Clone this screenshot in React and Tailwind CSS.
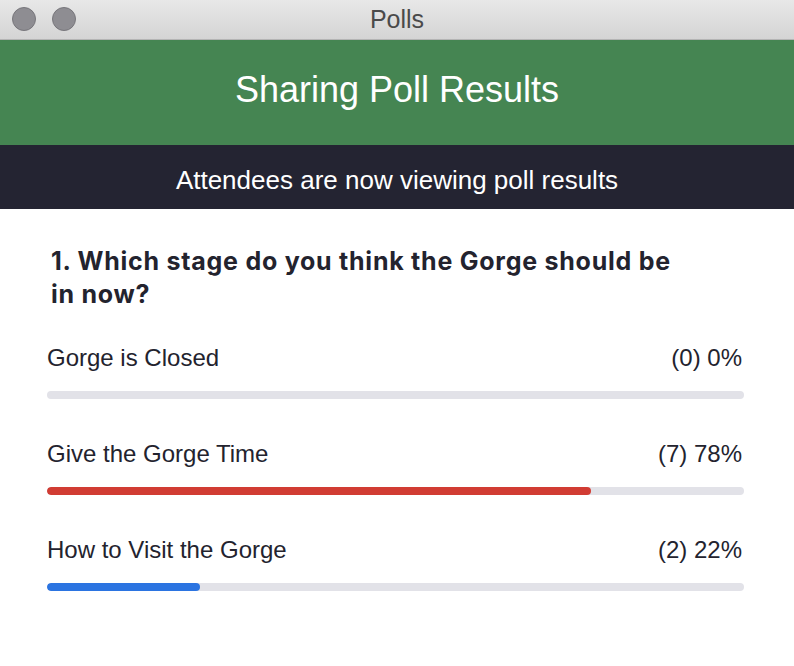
import React from "react";

const rows = [
  { label: "Gorge is Closed", value: "(0) 0%", pct: 0, color: "bg-transparent" },
  { label: "Give the Gorge Time", value: "(7) 78%", pct: 78, color: "bg-[#d13c33]" },
  { label: "How to Visit the Gorge", value: "(2) 22%", pct: 22, color: "bg-[#2b74e1]" },
];

export default function App() {
  return (
    <div className="w-[794px] h-[666px] bg-white overflow-hidden font-['Liberation_Sans',Arial,sans-serif]">
      <div className="relative h-[40px] bg-gradient-to-b from-[#e8e8e8] to-[#d4d4d4] border-b border-[#b4b4b4] flex items-center justify-center">
        <div className="absolute left-[12px] top-[7px] flex gap-[16px]">
          <div className="w-[24px] h-[24px] rounded-full bg-[#8e8d92] border border-[#77767b]" />
          <div className="w-[24px] h-[24px] rounded-full bg-[#8e8d92] border border-[#77767b]" />
        </div>
        <span className="text-[25px] text-[#4a4a4a] leading-none">Polls</span>
      </div>
      <div className="h-[105px] bg-[#458552] flex items-center justify-center pb-[6px]">
        <span className="text-[36px] text-white leading-none">Sharing Poll Results</span>
      </div>
      <div className="h-[64px] bg-[#242432] flex items-center justify-center pt-[6px]">
        <span className="text-[26px] text-white leading-none">Attendees are now viewing poll results</span>
      </div>
      <div className="pl-[47px] pr-[50px] pt-[36px]">
        <div className="pl-[4px] pr-[60px] font-['Inter',sans-serif] font-bold text-[25px] leading-[33px] tracking-[0.75px] text-[#23232e]">
          1. Which stage do you think the Gorge should be in now?
        </div>
        <div className="mt-[34px] flex flex-col gap-[42px]">
          {rows.map((r) => (
            <div key={r.label} className="flex flex-col">
              <div className="flex justify-between items-center h-[26px] text-[24px] text-[#23232e] leading-none">
                <span>{r.label}</span>
                <span className="pr-[2px]">{r.value}</span>
              </div>
              <div className="mt-[20px] h-[8px] rounded-full bg-[#e2e2e8] overflow-hidden">
                <div className={`h-full rounded-full ${r.color}`} style={{ width: `${r.pct}%` }} />
              </div>
            </div>
          ))}
        </div>
      </div>
    </div>
  );
}
